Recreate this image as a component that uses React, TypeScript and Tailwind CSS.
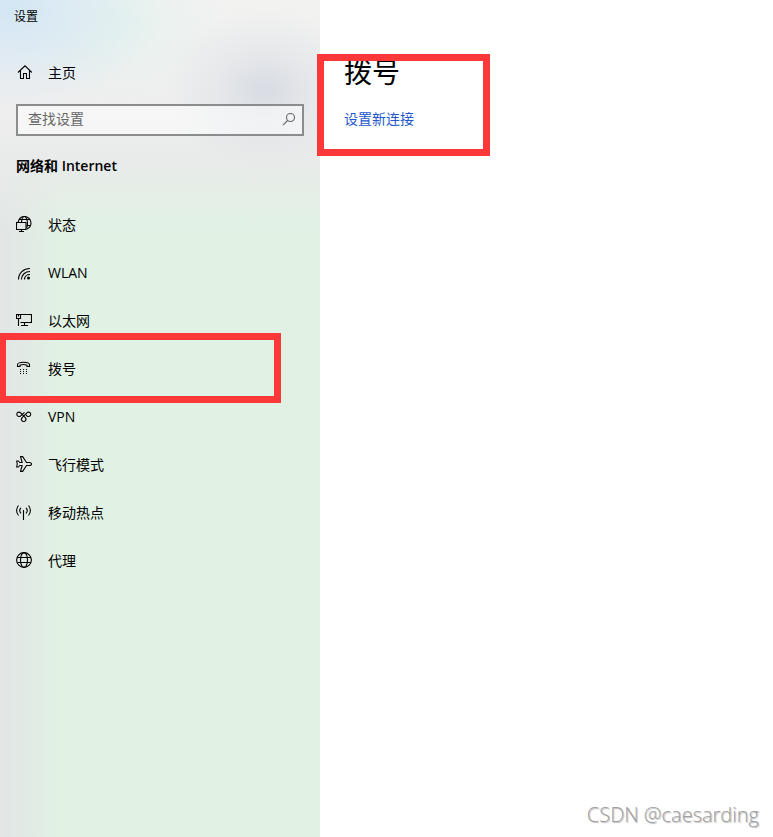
import React from 'react';

interface IconProps {
  children: React.ReactNode;
}

const Icon: React.FC<IconProps> = ({ children }) => (
  <svg
    className="size-4 shrink-0"
    viewBox="0 0 16 16"
    fill="none"
    stroke="currentColor"
    strokeWidth="1.1"
    aria-hidden="true"
  >
    {children}
  </svg>
);

const HomeIcon = () => (
  <Icon>
    <path d="M2 8.5 9 1.8l7 6.7M4.5 6.5v8h3v-5h3v5h3v-8" />
  </Icon>
);

const SearchIcon = () => (
  <Icon>
    <circle cx="10.5" cy="6.5" r="4" />
    <path d="M7.6 9.5 3 14.2" />
  </Icon>
);

const StatusIcon = () => (
  <Icon>
    <path d="M2 6.5C2.800 3 5.400.500 8.500.500c3.700 0 6.500 2.900 6.500 6.500 0 2.900-1.800 5.200-4.500 6.200" />
    <path d="M5.500 6.500c.2-3.300 1.300-6 3-6s3 3.200 3 6.500c0 2-.3 3.700-.8 5M3 3.500h11M10.500 9.500h4" />
    <path d="M.5 6.500h9.500v7H.5zM5.500 13.500v2M3 15.500h5" />
  </Icon>
);

const WlanIcon = () => (
  <Icon>
    <path
      d="M2.5 15.5C2.5 9 7.5 4.500 14 4.500M5.500 15.500c0-4.800 3.700-8 8.500-8M8.500 15.500c0-3.100 2.400-5 5.500-5"
      strokeWidth="1.2"
    />
    <circle cx="12.5" cy="14" r="1.5" fill="currentColor" stroke="none" />
  </Icon>
);

const EthernetIcon = () => (
  <Icon>
    <path d="M4.5 2.5h11v8H4.5M8.500 10.500v3M5 13.500h7" />
    <path d="M.5 2.500h4v4h-4zM2.500 6.500v7.500M2.500 3v1.500" />
  </Icon>
);

const DialUpIcon = () => (
  <Icon>
    <path d="M1.500 6.500h2.500V5.200c2-.8 5-.8 7 0v1.300h2.500V4.800c0-1.700-2.600-2.500-6-2.500s-6 .8-6 2.500z" />
    <path d="M4 9.500h1M7 9.500h1M10 9.500h1M4 11.500h1M7 11.500h1M10 11.500h1M4 13.500h1M7 13.500h1M10 13.500h1" />
  </Icon>
);

const VpnIcon = () => (
  <Icon>
    <path d="M8.500 4.300 4.600 7.800a2.200 2.200 0 1 1 0-3l4.700 4.900a2.200 2.200 0 1 1-3.200 0L10.900 4.800a2.200 2.200 0 1 1 0 3L9.700 6.500" />
  </Icon>
);

const AirplaneIcon = () => (
  <Icon>
    <path
      d="M.6 5h1.900l1.300 1.500h2.400L4.500.6h2.200l3.800 5.900h3c1.200 0 2 .7 2 1.500s-.8 1.500-2 1.500h-3l-3.800 5.900H4.500l1.700-5.900H3.800L2.500 11H.6l.7-3z"
      strokeLinejoin="round"
    />
  </Icon>
);

const HotspotIcon = () => (
  <Icon>
    <path d="M2.500 1.500c-2.500 2.700-2.500 7.300 0 10M5 3.800c-1.500 1.600-1.500 3.900 0 5.500M10 3.800c1.500 1.600 1.500 3.900 0 5.500M12.500 1.500c2.500 2.700 2.500 7.300 0 10M7.500 6v10" />
  </Icon>
);

const ProxyIcon = () => (
  <Icon>
    <circle cx="8" cy="8" r="7.4" />
    <ellipse cx="8" cy="8" rx="3.5" ry="7.4" />
    <path d="M1.300 5.500h13.400M1.300 10.500h13.400" />
  </Icon>
);

const items = [
  { label: '状态', icon: StatusIcon },
  { label: 'WLAN', icon: WlanIcon },
  { label: '以太网', icon: EthernetIcon },
  { label: '拨号', icon: DialUpIcon, marked: true },
  { label: 'VPN', icon: VpnIcon },
  { label: '飞行模式', icon: AirplaneIcon },
  { label: '移动热点', icon: HotspotIcon },
  { label: '代理', icon: ProxyIcon },
];

const Sidebar = () => (
  <aside className="w-80 shrink-0 bg-[#e1f2e4] bg-[radial-gradient(ellipse_100px_80px_at_265px_90px,rgba(204,210,221,0.65),rgba(214,219,227,0.35)_50%,transparent),radial-gradient(ellipse_150px_100px_at_10px_10px,rgba(208,229,245,0.9),transparent),radial-gradient(ellipse_110px_80px_at_120px_25px,rgba(228,243,237,0.8),transparent),linear-gradient(to_bottom,#f2f2f1_0px,#eeeeee_110px,#e8ebe9_165px,transparent_235px),linear-gradient(to_right,#e2e6e6_0px,#e1eae5_26px,transparent_60px)]">
    <header className="flex h-8 items-center px-3.5 pt-0.5 text-xs">设置</header>

    <a href="#home" className="mt-4 flex h-12 items-center gap-4 px-4">
      <HomeIcon />
      <span className="pt-0.5">主页</span>
    </a>

    <form className="mx-4 mt-2 flex h-8 items-center border-2 border-[#8a8c8d] bg-white/50 pr-1.5 pb-0.5 pl-2.5">
      <input
        type="text"
        aria-label="查找设置"
        placeholder="查找设置"
        className="min-w-0 flex-1 bg-transparent outline-none placeholder:text-[#666]"
      />
      <button type="button" aria-label="搜索" className="text-[#666]">
        <SearchIcon />
      </button>
    </form>

    <h2 className="mx-4 mt-5 font-semibold">网络和 Internet</h2>

    <nav className="mt-6">
      {items.map(({ label, icon: ItemIcon, marked }) => (
        <a key={label} href={`#${label}`} className="relative flex h-12 items-center gap-4 px-4">
          <ItemIcon />
          <span className="pt-0.5">{label}</span>
          {marked && (
            <span className="absolute -top-[11px] -left-px h-[70px] w-[282px] border-7 border-[#fc3838]" />
          )}
        </a>
      ))}
    </nav>
  </aside>
);

export default function App() {
  return (
    <div className="relative flex min-h-screen bg-white font-['Open_Sans','Noto_Sans_CJK_SC',sans-serif] text-sm leading-5 text-black">
      <Sidebar />

      <main className="relative flex-1 px-6 pt-13">
        <h1 className="text-[28px] leading-10">拨号</h1>
        <a href="#new" className="mt-[17px] inline-block text-[#2458cc]">
          设置新连接
        </a>
        <span className="absolute top-[54px] -left-[3px] h-[102px] w-[173px] border-7 border-[#fc3838]" />
      </main>

      <p className="absolute right-3.5 bottom-2 text-xl leading-7 font-light text-[#a0a0a0] [text-shadow:1px_1px_1px_#bbb]">
        CSDN @caesarding
      </p>
    </div>
  );
}
